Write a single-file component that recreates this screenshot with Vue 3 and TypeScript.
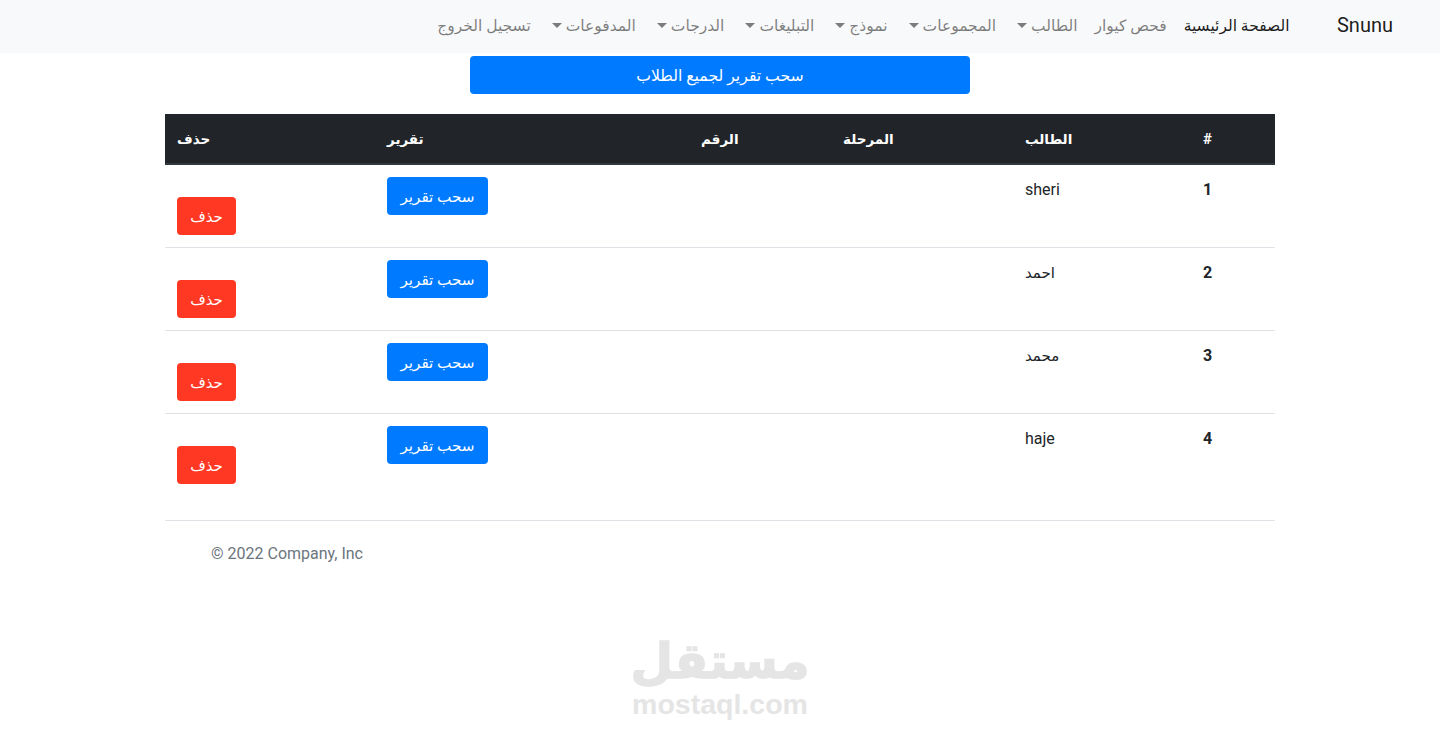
<script setup lang="ts">
interface NavItem { label: string; caret: boolean; active?: boolean }
const navItems: NavItem[] = [
  { label: 'الصفحة الرئيسية', caret: false, active: true },
  { label: 'فحص كيوار', caret: false },
  { label: 'الطالب', caret: true },
  { label: 'المجموعات', caret: true },
  { label: 'نموذج', caret: true },
  { label: 'التبليغات', caret: true },
  { label: 'الدرجات', caret: true },
  { label: 'المدفوعات', caret: true },
  { label: 'تسجيل الخروج', caret: false },
]
const students = [
  { id: 1, name: 'sheri', arabic: false },
  { id: 2, name: 'احمد', arabic: true },
  { id: 3, name: 'محمد', arabic: true },
  { id: 4, name: 'haje', arabic: false },
]
</script>

<template>
  <div class="page">
    <nav class="navbar">
      <a class="brand">Snunu</a>
      <ul class="nav">
        <li v-for="item in navItems" :key="item.label">
          <a class="nav-link" :class="{ active: item.active }">{{ item.label }}<span v-if="item.caret" class="caret"></span></a>
        </li>
      </ul>
    </nav>

    <main class="container">
      <div class="top-action"><button class="btn btn-primary wide">سحب تقرير لجميع الطلاب</button></div>
      <table class="table">
        <colgroup>
          <col class="c1" /><col class="c2" /><col class="c3" /><col class="c4" /><col class="c5" /><col class="c6" />
        </colgroup>
        <thead>
          <tr>
            <th>حذف</th><th>تقرير</th><th>الرقم</th><th>المرحلة</th><th>الطالب</th><th class="hash">#</th>
          </tr>
        </thead>
        <tbody>
          <tr v-for="s in students" :key="s.id">
            <td><button class="btn btn-danger">حذف</button></td>
            <td><button class="btn btn-primary report">سحب تقرير</button></td>
            <td></td>
            <td></td>
            <td class="name" :class="{ 'ar-name': s.arabic }">{{ s.name }}</td>
            <th class="num">{{ s.id }}</th>
          </tr>
        </tbody>
      </table>
      <footer class="footer">© 2022 Company, Inc</footer>
    </main>

    <div class="watermark">
      <div class="wm-ar">مستقل</div>
      <div class="wm-en">mostaql.com</div>
    </div>
  </div>
</template>

<style>
html, body { margin: 0; background: #fff; }
</style>

<style scoped>
.page {
  position: relative;
  height: 734px;
  overflow: hidden;
  font-family: Roboto, "DejaVu Sans", sans-serif;
  font-size: 16px;
  line-height: 24px;
  color: #212529;
}
.navbar {
  direction: rtl;
  display: flex;
  align-items: center;
  height: 53px;
  box-sizing: border-box;
  padding-right: 47px;
  padding-bottom: 4px;
  background: #f8f9fa;
}
.brand { font-size: 20px; line-height: 30px; margin-left: 39px; color: rgba(0,0,0,.9); }
.nav { display: flex; list-style: none; margin: 0; padding: 0; }
.nav-link { display: block; padding: 9px 8.5px 7px; font-size: 15.5px; color: rgba(0,0,0,.5); white-space: nowrap; }
.nav-link.active { color: rgba(0,0,0,.9); }
.caret {
  display: inline-block;
  margin: 0 4px;
  vertical-align: 3px;
  border-top: 5px solid;
  border-left: 5px solid transparent;
  border-right: 5px solid transparent;
}
.container { width: 1110px; margin: 0 auto; }
.top-action { display: flex; justify-content: center; padding-top: 3px; margin-bottom: 20px; }
.btn {
  display: inline-block;
  box-sizing: border-box;
  height: 38px;
  padding: 1px 0 0;
  border: 0;
  border-radius: 4px;
  font: inherit;
  color: #fff;
  white-space: nowrap;
}
.btn-primary { background: #007bff; }
.report { width: 101px; font-size: 15.2px; }
.btn-danger { background: #ff3823; margin-top: 20px; width: 59px; display: block; font-size: 15px; }
.wide { width: 500px; font-size: 15.7px; }
.table { width: 1110px; table-layout: fixed; border-collapse: collapse; }
.c1 { width: 210px; } .c2 { width: 314px; } .c3 { width: 142px; }
.c4 { width: 182px; } .c5 { width: 178px; } .c6 { width: 84px; }
th, td { padding: 12px; text-align: left; vertical-align: top; }
thead th {
  background: #212529;
  color: #fff;
  border-bottom: 2px solid #32383e;
  line-height: 23px;
  height: 23px;
  padding-top: 14px;
  font-size: 13.5px;
}
thead th.hash { font-size: 15px; }
tbody tr { border-bottom: 1px solid #dee2e6; }
tbody tr:last-child { border-bottom: 0; }
.name, .num { padding-top: 13px; }
.ar-name { font-size: 15px; }
.num { font-weight: 700; }
.footer {
  margin-top: 24px;
  border-top: 1px solid #dee2e6;
  padding: 21px 46px 20px;
  color: #6c757d;
}
.watermark {
  position: absolute;
  left: 620px;
  top: 630px;
  width: 200px;
  text-align: center;
  color: #e5e5e5;
  font-weight: 700;
}
.wm-ar {
  padding-top: 4px;
  font-size: 49px;
  line-height: 56px;
  font-family: "DejaVu Sans", sans-serif;
  -webkit-text-stroke: 1.5px #e5e5e5;
}
.wm-en { margin-top: -1px; font-size: 28.5px; line-height: 30px; font-family: "Liberation Sans", sans-serif; }
</style>
